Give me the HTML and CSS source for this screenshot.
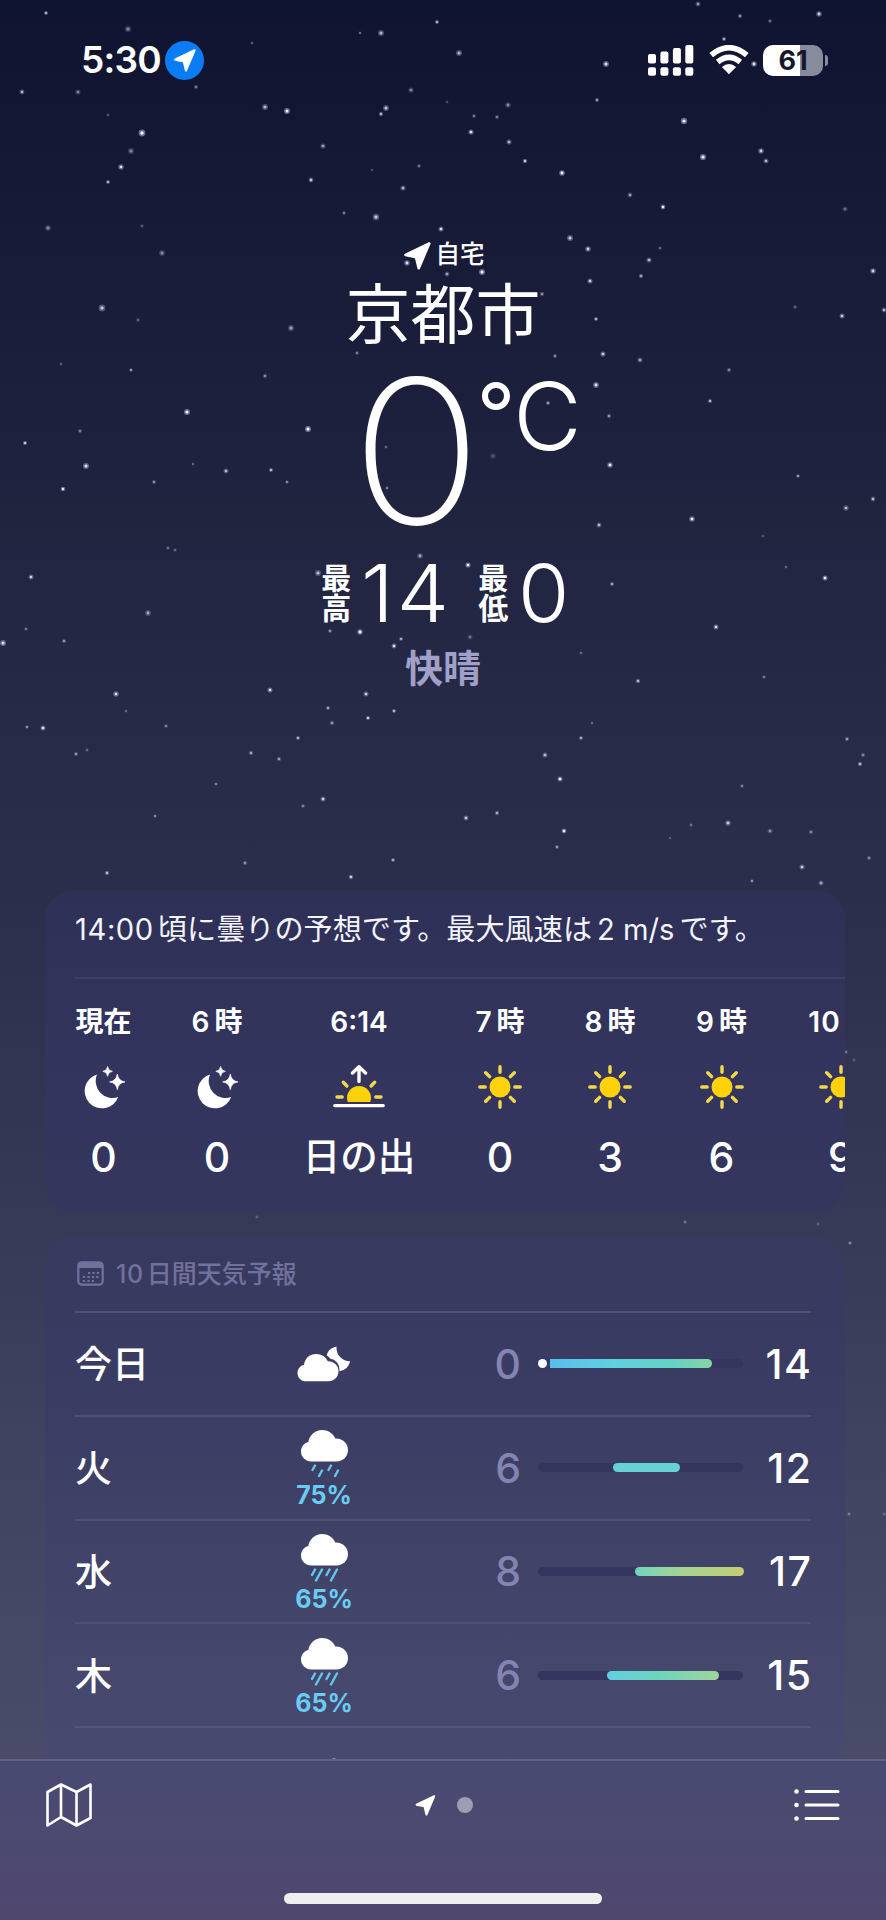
FILE: index.html
```html
<!DOCTYPE html>
<html lang="ja">
<head>
<meta charset="utf-8">
<title>天気</title>
<link rel="stylesheet" href="styles.css">
</head>
<body>
<svg class="defs" width="0" height="0" aria-hidden="true">
  <symbol id="arrow" viewBox="0 0 26 27"><path d="M24.3 1.5 1.5 12.4 11.6 14.6 14.2 25.2Z" fill="currentColor" stroke="currentColor" stroke-width="2.600" stroke-linejoin="round"/></symbol>
  <symbol id="moon" viewBox="0 0 42 43">
    <path d="M14 9A17.3 17.3 0 1 0 35.2 31.6 17 17 0 0 1 14 9Z" fill="#fff"/>
    <path d="M24.6 1Q25.2 5.4 29.4 5.8 25.2 6.3 24.6 10.8 24 6.3 19.8 5.8 24 5.4 24.6 1ZM34.3 8.6Q35.3 15.6 42 16.4 35.3 17.2 34.3 24.2 33.3 17.2 26.6 16.4 33.3 15.6 34.3 8.6Z" fill="#fff" stroke="#fff" stroke-width=".7" stroke-linejoin="round"/>
  </symbol>
  <symbol id="sun" viewBox="0 0 44 44">
    <circle cx="22" cy="22" r="10.5" fill="#fdd20a"/>
    <path d="M22 1.8v5.4M22 36.8v5.4M1.8 22h5.4M36.8 22h5.4M7.7 7.7l3.9 3.9M32.4 32.4l3.9 3.9M7.7 36.3l3.9-3.9M32.4 11.6l3.9-3.9" stroke="#f2d84a" stroke-width="3.4" stroke-linecap="round"/>
  </symbol>
  <symbol id="sunrise" viewBox="0 0 52 44">
    <path d="M14.7 37A12 12 0 1 1 37.3 37Z" fill="#fdd20a"/>
    <path d="M4 32h5.2M42.8 32h5.2M10.3 17.3l3.6 3.7M41.7 17.3l-3.6 3.7" stroke="#f2d84a" stroke-width="3.4" stroke-linecap="round"/>
    <path d="M26 2v14.5M19.5 8 26 1.8 32.5 8M1.8 40.6h48.4" stroke="#fff" stroke-width="3.4" stroke-linecap="round" stroke-linejoin="round" fill="none"/>
  </symbol>
  <symbol id="cloudmoon" viewBox="0 0 54 36">
    <path d="M39.5.6A13.4 13.4 0 0 0 53.2 15.2 13.2 13.2 0 0 1 42.4 25.2C43 18 38.5 13.5 33.7 13 32.5 11.5 31 10 29.8 9.4 30.5 5 34.500 1.500 39.500.6Z" fill="#fff"/>
    <path d="M9 35.300C4 35.300.5 31.600.5 27 .5 23 3.200 19.500 7 18.700 8 12 13 8 19 8c5.500 0 9.800 3 11.800 7.300C37 15 41.500 19.500 41.500 25.300c0 5.600-4.400 10-10 10z" fill="#fff"/>
  </symbol>
  <symbol id="cloud" viewBox="0 0 47 32"><path d="M10.500 31.500C4.500 31.500 0 27 0 21.500 0 17 3 13 7.300 12 8.500 5 14 0 21 0c6 0 11 3.200 13.300 8.500C41.500 8 47 13.400 47 20c0 6.400-5 11.500-11.500 11.500z" fill="#fff"/></symbol>
</svg>
<main class="screen">
  <svg class="stars" id="stars" viewBox="0 0 886 1920" aria-hidden="true"></svg>

  <header class="status">
    <span class="clock">5:30</span>
    <span class="loc-badge"><svg width="22" height="23"><use href="#arrow"/></svg></span>
    <span class="spacer"></span>
    <svg class="signal" width="46" height="31" viewBox="0 0 46 31" fill="#fff"><rect y="9" width="8" height="9.500" rx="2"/><rect x="12.400" y="6.500" width="8" height="12" rx="2"/><rect x="24.900" y="3" width="8" height="15.500" rx="2"/><rect x="37.300" width="8" height="18.500" rx="2"/><rect y="22.300" width="8" height="8.500" rx="2"/><rect x="12.400" y="22.300" width="8" height="8.500" rx="2"/><rect x="24.900" y="22.300" width="8" height="8.500" rx="2"/><rect x="37.300" y="22.300" width="8" height="8.500" rx="2"/></svg>
    <svg class="wifi" width="40" height="30" viewBox="0 0 40 30"><path d="M2.200 10.200Q20-4.800 37.800 10.200M8.700 17Q20 7.800 31.300 17" fill="none" stroke="#fff" stroke-width="5.600"/><path d="M20 29.300 12.900 22Q20 16.200 27.100 22Z" fill="#fff"/></svg>
    <span class="battery"><span class="battery-body">61</span><span class="battery-nub"></span></span>
  </header>

  <section class="hero">
    <div class="place"><svg width="27" height="28"><use href="#arrow"/></svg><span>自宅</span></div>
    <h1 class="city">京都市</h1>
    <div class="temp"><span class="temp-num">0</span><span class="deg"></span><span class="unit">C</span></div>
    <div class="range">
      <span class="range-label">最<br>高</span><span class="range-num high">14</span>
      <span class="range-label">最<br>低</span><span class="range-num">0</span>
    </div>
    <div class="condition">快晴</div>
  </section>

  <section class="card hourly">
    <p class="summary"><span class="n1">14:00</span>頃に曇りの予想です。最大風速は<span class="n2">2 m/s</span>です。</p>
    <div class="hours">
      <div class="hour"><b>現在</b><svg width="42" height="43"><use href="#moon"/></svg><span>0</span></div>
      <div class="hour"><b><i>6</i>時</b><svg width="42" height="43"><use href="#moon"/></svg><span>0</span></div>
      <div class="hour"><b>6:14</b><svg width="52" height="44"><use href="#sunrise"/></svg><span class="jp">日の出</span></div>
      <div class="hour"><b><i>7</i>時</b><svg width="44" height="44"><use href="#sun"/></svg><span>0</span></div>
      <div class="hour"><b><i>8</i>時</b><svg width="44" height="44"><use href="#sun"/></svg><span>3</span></div>
      <div class="hour"><b><i>9</i>時</b><svg width="44" height="44"><use href="#sun"/></svg><span>6</span></div>
      <div class="hour"><b><i>10</i>時</b><svg width="44" height="44"><use href="#sun"/></svg><span>9</span></div>
    </div>
  </section>

  <section class="card daily">
    <div class="daily-head">
      <svg width="27" height="25" viewBox="0 0 27 25"><rect x="1.300" y="1.300" width="24.400" height="22.400" rx="3.500" fill="none" stroke="currentColor" stroke-width="2.200"/><path d="M1.500 4Q1.500 1.500 4 1.500H23Q25.500 1.500 25.500 4V7H1.500Z" fill="currentColor"/><path d="M11 12h11M6 16h16M6 20h11" stroke="currentColor" stroke-width="2.200" stroke-dasharray="2.200 2.200"/></svg>
      <span><i>10</i>日間天気予報</span>
    </div>
    <div class="day"><span class="name">今日</span><div class="sky"><svg width="54" height="36"><use href="#cloudmoon"/></svg></div><span class="low">0</span><div class="track today"><div class="now"></div><div class="fill" style="left:12px;width:162px;background:linear-gradient(90deg,#55bfee,#5fd0df 38%,#62d2c4 75%,#86d6a2)"></div></div><span class="top">14</span></div>
    <div class="day"><span class="name">火</span><div class="sky rain"><svg width="47" height="32"><use href="#cloud"/></svg><svg width="29" height="14" viewBox="0 0 29 14"><path d="M5 1.500 2.500 6M12 6.500 9 12M21 1.500 18.500 6M28 6.500 25 12" stroke="#62c8ee" stroke-width="2.400" stroke-linecap="round"/></svg><span>75%</span></div><span class="low">6</span><div class="track"><div class="fill" style="left:75px;width:67px;background:#65d2d6"></div></div><span class="top">12</span></div>
    <div class="day"><span class="name">水</span><div class="sky rain"><svg width="47" height="32"><use href="#cloud"/></svg><svg width="29" height="14" viewBox="0 0 29 14"><path d="M5 1.500 2 7M12 1.500 6 12.500M19.500 1.500 16.500 7M27 1.500 21 12.500" stroke="#62c8ee" stroke-width="2.400" stroke-linecap="round"/></svg><span>65%</span></div><span class="low">8</span><div class="track"><div class="fill" style="left:97px;width:109px;background:linear-gradient(90deg,#70d5bd,#a3d394 40%,#c3cf70)"></div></div><span class="top">17</span></div>
    <div class="day"><span class="name">木</span><div class="sky rain"><svg width="47" height="32"><use href="#cloud"/></svg><svg width="29" height="14" viewBox="0 0 29 14"><path d="M5 1.500 2 7M12 1.500 6 12.500M19.500 1.500 16.500 7M27 1.500 21 12.500" stroke="#62c8ee" stroke-width="2.400" stroke-linecap="round"/></svg><span>65%</span></div><span class="low">6</span><div class="track"><div class="fill" style="left:69px;width:112px;background:linear-gradient(90deg,#62cfe2,#6cd5bd 45%,#a0d59b)"></div></div><span class="top">15</span></div>
    <div class="last-rule"></div>
  </section>

  <footer class="toolbar">
    <div class="tools">
      <svg width="46" height="44" viewBox="0 0 46 44" fill="none" stroke="#fff" stroke-width="2.600" stroke-linejoin="round"><path d="M1.500 9 15 1.500 30.500 9 44.500 1.500V35L30.500 42.500 15 34 1.500 42.500ZM15 1.500V34M30.500 9V42.500"/></svg>
      <div class="pages"><svg width="21" height="21"><use href="#arrow"/></svg><span class="dot"></span></div>
      <svg width="46" height="32" viewBox="0 0 46 32" fill="none" stroke="#fff" stroke-width="3" stroke-linecap="round"><path d="M12 2.500H44M12 16H44M12 29.500H44"/><path d="M2.500 2.500h.01M2.500 16h.01M2.500 29.500h.01" stroke-width="4.600"/></svg>
    </div>
    <div class="home"></div>
  </footer>
</main>
<script src="stars.js"></script>
</body>
</html>
```
FILE: styles.css
```css
* { box-sizing: border-box; }
body { margin: 0; background: #101530; }
i { font-style: normal; }
.defs { position: absolute; }
.screen {
  position: relative;
  display: flex;
  flex-direction: column;
  width: 886px;
  height: 1920px;
  overflow: hidden;
  color: #fff;
  font-family: Inter, "Noto Sans CJK JP", sans-serif;
  background: linear-gradient(#0f1430 0, #121632 100px, #161a37 200px, #1b1f3c 380px, #20243f 520px, #252946 680px, #2b2e4b 880px, #303450 1050px, #373a56 1230px, #40435f 1450px, #494c68 1740px, #4d4b6b 1920px);
}
.stars { position: absolute; inset: 0; width: 886px; height: 1920px; }
.screen > :not(.stars) { position: relative; }

.status { display: flex; align-items: center; height: 120px; padding: 0 58px 0 81px; }
.clock { font-size: 37px; font-weight: 600; letter-spacing: -0.8px; width: 84px; line-height: 42px; white-space: nowrap; }
.loc-badge { display: flex; align-items: center; justify-content: center; width: 39px; height: 39px; border-radius: 50%; background: #0b7df4; }
.spacer { flex: 1; }
.wifi { margin: 0 14px 0 15px; }
.battery { display: flex; align-items: center; gap: 2px; }
.battery-body { width: 60px; height: 31px; border-radius: 10px; background: linear-gradient(90deg, #fff 37px, #878b9c 37px); color: #15182c; font-size: 27px; font-weight: 700; line-height: 31px; text-align: center; }
.battery-nub { width: 3px; height: 11px; border-radius: 0 4px 4px 0; background: #878b9c; }

.hero { display: flex; flex-direction: column; align-items: center; height: 770px; padding-top: 119px; }
.place { display: flex; align-items: center; gap: 5px; height: 34px; padding-left: 2px; font-size: 24.500px; font-weight: 500; }
.place span { line-height: 30px; margin-top: -4px; }
.city { margin: 9px 0 0; height: 66px; line-height: 66px; font-size: 65px; font-weight: 400; }
.temp { display: flex; height: 218px; margin-left: 50px; align-items: flex-start; }
.temp-num { font-size: 201px; font-weight: 200; line-height: 206px; width: 125px; text-align: center; transform: scaleX(1.08); }
.deg { width: 28px; height: 28px; border: 6px solid #fff; border-radius: 50%; margin: 34px 3px 0 3px; }
.unit { font-size: 94px; font-weight: 300; line-height: 136px; }
.range { display: flex; align-items: center; height: 62px; margin: -4px 0 0 3px; }
.range-label { font-size: 30px; font-weight: 700; line-height: 30px; width: 30px; }
.range-num { font-size: 80px; font-weight: 300; line-height: 62px; margin-left: 10px; transform: scaleX(1.04); transform-origin: left; }
.range-num.high { width: 117px; letter-spacing: 3px; }
.condition { margin-top: 17px; height: 54px; line-height: 54px; font-size: 38px; font-weight: 700; color: #a0a0c8; }

.card { margin: 0 41px 0 45px; border-radius: 30px; overflow: hidden; flex: none; }
.hourly { height: 323px; background: linear-gradient(#2e3057, #33355e 60%, #34365e); }
.summary { margin: 0 0 0 30px; height: 89px; line-height: 80px; font-size: 29.150px; white-space: nowrap; border-bottom: 2px solid #3e4068; color: #f3f4fc; }
.summary .n1 { margin-right: 4px; letter-spacing: .6px; }
.summary .n2 { margin: 0 5px; }
.hours { display: flex; gap: 60px; width: 820px; margin: 25px 0 0 30px; }
.hour { display: flex; flex-direction: column; align-items: center; height: 184px; flex: none; }
.hour:nth-child(1) { width: 57px; }
.hour:nth-child(2) { width: 50px; }
.hour:nth-child(3) { width: 114px; }
.hour:nth-child(4) { width: 48px; }
.hour:nth-child(5) { width: 52px; }
.hour:nth-child(6) { width: 51px; }
.hour:nth-child(7) { width: 68px; }
.hour b { font-size: 28px; font-weight: 600; line-height: 36px; white-space: nowrap; }
.hour b i { margin-right: 5px; }
.hour:last-child b i { letter-spacing: 1px; }
.hour svg { height: 44px; margin-top: 25px; flex: none; }
.hour span { font-size: 41px; font-weight: 500; line-height: 54px; margin-top: 21px; white-space: nowrap; }
.hour .jp { font-size: 37.500px; }

.daily { height: 522px; margin-top: 23px; margin-bottom: 1px; border-radius: 30px 30px 0 0; padding: 0 34px 0 30px; background: linear-gradient(#38395f, #3b3c63 30%, #424369 65%, #484a70); }
.daily-head { display: flex; align-items: center; gap: 12px; height: 75px; padding-left: 2px; font-size: 25px; font-weight: 500; color: #71719c; }
.daily-head span { margin-top: -3px; }
.daily-head i { margin-right: 3px; letter-spacing: .6px; }
.day { display: grid; grid-template-columns: 213px 72px 1fr 205px 68px; align-items: center; height: 103.800px; border-top: 2px solid #50517a; }
.last-rule { height: 2px; background: #55567e; }
.name { font-size: 37px; font-weight: 500; margin-top: -3px; }
.sky { display: flex; flex-direction: column; align-items: center; }
.rain { margin-top: 1px; }
.rain span { font-size: 25px; font-weight: 700; line-height: 22px; margin-top: 6px; color: #69cdf2; }
.rain svg + svg { margin-top: 2px; }
.low { font-size: 41px; font-weight: 500; text-align: right; padding-right: 17px; color: #8384b0; }
.top { font-size: 41px; font-weight: 500; text-align: right; letter-spacing: 1.500px; margin-right: -1.500px; }
.track { position: relative; height: 9px; border-radius: 5px; background: #35365f; }
.fill { position: absolute; top: 0; height: 9px; border-radius: 5px; }
.today .fill { border-radius: 0 5px 5px 0; }
.now { position: absolute; left: 0; top: 0; width: 9px; height: 9px; border-radius: 50%; background: #fff; box-shadow: 0 0 0 3px #393a62; }

.toolbar { flex: 1; border-top: 2px solid #60618a; background: linear-gradient(#484a72, #4b4a71 40%, #50476f); }
.tools { display: grid; grid-template-columns: 46px 1fr 46px; align-items: center; height: 88px; padding: 0 46px; }
.pages { display: flex; align-items: center; justify-content: center; gap: 21px; padding-left: 1px; }
.dot { width: 16px; height: 16px; border-radius: 50%; background: #9c9cb2; }
.home { width: 318px; height: 11px; border-radius: 6px; background: #f0eff0; margin: 44px auto 0; }
```
FILE: stars.js
```js
// Each star: x, y, radius, opacity
const stars = [
  [46,13,2,.7],[128,29,3.2,.4],[252,43,1.5,.4],[360,33,1.5,.5],[381,33,3,.6],[437,22,2,.7],
  [22,92,2.4,.6],[78,92,2.6,.4],[196,87,2.2,.4],[108,115,1.7,.3],[142,133,3.4,.95],[131,151,3,.4],
  [121,167,2.7,.8],[108,182,2,.7],[265,107,3,.6],[287,111,3,.9],[411,90,2.6,.4],[386,108,3,.65],
  [381,114,2.2,.7],[323,146,2.6,.5],[311,180,2.4,.7],[372,170,1.5,.3],[419,166,2,.4],[403,188,2.6,.6],
  [344,213,2,.4],[376,217,3.2,.7],[698,4,2.5,.5],[740,16,2.2,.5],[770,21,2,.4],[819,14,2.8,.7],
  [459,53,3,.6],[606,64,3,.8],[724,39,2,.7],[754,64,2.8,.8],[508,105,2.8,.4],[597,100,2,.6],
  [474,116,2,.4],[497,117,2.200,.4],[471,132,2.6,.8],[509,142,2.6,.6],[525,161,2.2,.8],[562,173,2.8,.9],
  [684,121,3.2,.9],[703,157,3.1,.9],[761,151,2.8,.7],[766,161,2.5,.6],[630,195,2.4,.5],[663,207,2.400,.9],
  [845,209,2.600,.3],[447,102,1.5,.3],[48,228,3,.4],[162,253,3,.4],[142,226,2,.25],[441,229,2.5,.8],
  [570,238,3,.7],[588,249,2.8,.7],[649,260,2.6,.6],[660,248,1.5,.5],[641,276,2.2,.6],[590,281,2.6,.7],
  [407,263,2.8,.8],[447,274,2.5,.5],[482,272,3,.9],[542,294,2.2,.5],[596,319,2,.7],[873,271,2.8,.7],
  [842,316,2.5,.7],[884,310,2.4,.6],[795,307,2,.3],[102,308,3.4,.65],[138,320,2,.3],[291,328,3,.5],
  [357,353,2,.4],[61,364,1.7,.3],[131,370,1.8,.6],[265,376,2.3,.4],[555,356,2,.5],[603,354,2.6,.7],
  [640,360,2.6,.5],[729,370,2.3,.4],[596,385,2.9,.8],[710,401,2.1,.7],[548,403,2,.6],[187,412,3,.9],
  [80,431,2.2,.4],[308,429,3,.95],[25,443,2.1,.8],[86,466,3,.8],[63,489,2.3,.9],[193,464,1.5,.4],
  [226,471,2.5,.6],[271,470,2.1,.7],[287,482,1.8,.5],[154,482,2,.5],[609,416,2.200,.5],[610,465,2.7,.9],
  [798,476,1.8,.6],[692,519,2.7,.9],[846,508,2.7,.6],[873,499,2.4,.6],[599,525,2.5,.6],[763,536,1.6,.3],
  [493,456,3,.2],[386,447,1.800,.3],[387,488,1.700,.5],[420,556,2.8,.5],[168,548,2.1,.3],[175,550,1.9,.3],
  [31,577,2.5,.7],[318,573,3,.6],[468,565,2.6,.9],[825,578,2.5,.9],[786,567,1.6,.4],[612,584,2,.6],
  [148,613,2.9,.5],[716,627,2.5,.8],[3,643,3,.8],[26,629,1.8,.4],[64,641,2.1,.5],[330,631,2.1,.5],
  [360,632,2.8,.9],[401,639,2.1,.6],[394,646,2.4,.8],[470,637,2.5,.3],[581,653,1.8,.3],[638,681,2.2,.7],
  [764,677,1.8,.4],[116,694,2.7,.8],[270,690,2.5,.8],[366,694,2.5,.7],[328,708,2,.6],[394,711,2,.7],
  [368,718,2.1,.8],[332,723,2.2,.5],[126,711,1.5,.4],[43,728,2.5,.8],[27,727,1.8,.5],[166,726,2,.4],
  [298,738,2,.7],[76,754,2.1,.5],[87,750,1.8,.3],[251,753,2.3,.5],[279,759,2.2,.5],[581,738,2.100,.6],
  [545,755,2.6,.6],[592,723,1.5,.4],[847,739,2.2,.5],[863,755,2.2,.4],[860,764,2.2,.7],[560,779,2.5,.9],
  [216,784,1.5,.6],[323,799,2.5,.7],[303,806,2.1,.4],[155,816,1.6,.6],[466,818,2.4,.7],[497,813,2.2,.6],
  [742,786,1.9,.4],[564,831,2.4,.9],[557,847,2,.5],[691,825,1.7,.4],[728,823,2.7,.7],[770,831,2.5,.4],
  [811,832,2.2,.4],[670,838,1.5,.3],[802,867,2.5,.7],[821,883,2.5,.5],[869,858,2.2,.4],[752,881,1.8,.5],
  [107,873,2.3,.6],[245,863,2.3,.4],[351,877,2.3,.7],[393,860,2.1,.6],[846,1052,2,.3],[854,1060,2,.2],
  [685,1222,2,.3],[818,1224,2,.2],[850,1243,2,.4],[257,1217,2,.2],[849,1514,2,.3],[884,1514,2,.2],
  [334,1758,2,.4]
];
const ns = "http://www.w3.org/2000/svg";
const sky = document.getElementById("stars");
for (const [x, y, r, o] of stars) {
  const halo = document.createElementNS(ns, "circle");
  halo.setAttribute("cx", x);
  halo.setAttribute("cy", y);
  halo.setAttribute("r", r);
  halo.setAttribute("fill", "#aab0d8");
  halo.setAttribute("opacity", o * 0.6);
  const core = halo.cloneNode();
  core.setAttribute("r", r * 0.5);
  core.setAttribute("fill", "#fff");
  core.setAttribute("opacity", o);
  sky.append(halo, core);
}
```
